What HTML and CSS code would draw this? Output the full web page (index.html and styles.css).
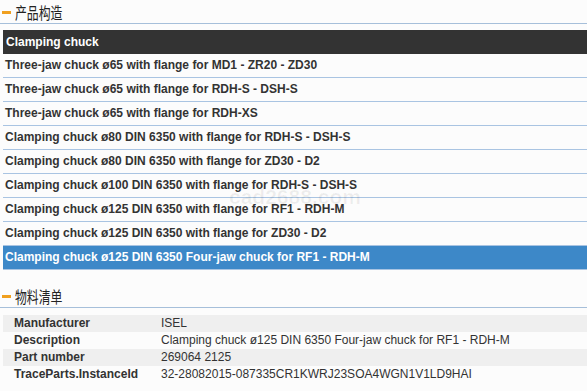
FILE: index.html
```html
<!DOCTYPE html>
<html lang="zh">
<head>
<meta charset="utf-8">
<title>产品构造</title>
<link rel="stylesheet" href="styles.css">
</head>
<body>
<div class="page">
  <div class="section-head"><span class="dash"></span><span class="head-text">产品构造</span></div>
  <div class="list">
    <div class="list-title">Clamping chuck</div>
    <div class="row">Three-jaw chuck ø65 with flange for MD1 - ZR20 - ZD30</div>
    <div class="row">Three-jaw chuck ø65 with flange for RDH-S - DSH-S</div>
    <div class="row">Three-jaw chuck ø65 with flange for RDH-XS</div>
    <div class="row">Clamping chuck ø80 DIN 6350 with flange for RDH-S - DSH-S</div>
    <div class="row">Clamping chuck ø80 DIN 6350 with flange for ZD30 - D2</div>
    <div class="row">Clamping chuck ø100 DIN 6350 with flange for RDH-S - DSH-S</div>
    <div class="row">Clamping chuck ø125 DIN 6350 with flange for RF1 - RDH-M</div>
    <div class="row">Clamping chuck ø125 DIN 6350 with flange for ZD30 - D2</div>
    <div class="row active">Clamping chuck ø125 DIN 6350 Four-jaw chuck for RF1 - RDH-M</div>
  </div>
  <div class="section-head second"><span class="dash"></span><span class="head-text">物料清单</span></div>
  <div class="bom">
    <div class="bom-row alt"><span class="label">Manufacturer</span><span class="value">ISEL</span></div>
    <div class="bom-row"><span class="label">Description</span><span class="value">Clamping chuck ø125 DIN 6350 Four-jaw chuck for RF1 - RDH-M</span></div>
    <div class="bom-row alt"><span class="label">Part number</span><span class="value">269064 2125</span></div>
    <div class="bom-row"><span class="label">TraceParts.InstanceId</span><span class="value">32-28082015-087335CR1KWRJ23SOA4WGN1V1LD9HAI</span></div>
  </div>
  <div class="watermark">cad2688.com</div>
</div>
</body>
</html>
```

FILE: styles.css
```css
html, body {
  margin: 0;
  padding: 0;
  background: #fcfcfc;
}
body {
  width: 587px;
  height: 391px;
  overflow: hidden;
  font-family: "Liberation Sans", Arial, sans-serif;
  font-size: 12px;
  color: #333;
}
.page {
  position: relative;
}
.section-head {
  height: 23px;
  border-bottom: 1px solid #a6bfda;
  display: flex;
  align-items: flex-start;
  position: relative;
}
.section-head.second {
  margin-top: 14px;
}
.dash {
  display: block;
  width: 9px;
  height: 3px;
  background: #f0a020;
  margin: 11px 0 0 2px;
}
.head-text {
  display: inline-block;
  margin-left: 4px;
  margin-top: 3px;
  font-family: "Noto Sans CJK SC", "Noto Sans", sans-serif;
  font-size: 16px;
  line-height: 18px;
  color: #222;
  transform: scaleX(0.74);
  transform-origin: left top;
}
.list {
  margin: 6px 0 0 3px;
}
.list-title {
  height: 24px;
  line-height: 24px;
  background: #333333;
  color: #fff;
  font-weight: bold;
  padding-left: 3px;
}
.row {
  height: 23px;
  line-height: 23px;
  border-bottom: 1px solid #a9c4e2;
  font-weight: bold;
  padding-left: 2px;
  white-space: nowrap;
}
.row.active {
  background: #3d88c8;
  color: #fff;
}
.bom {
  margin: 7px 0 0 3px;
}
.bom-row {
  display: grid;
  grid-template-columns: 158px 1fr;
  height: 17px;
  line-height: 17px;
  white-space: nowrap;
}
.bom-row.alt {
  background: #efefef;
}
.label {
  font-weight: bold;
  padding-left: 11px;
}
.watermark {
  position: absolute;
  left: 229px;
  top: 185px;
  font-size: 21px;
  font-weight: bold;
  color: rgba(0, 0, 0, 0.06);
  pointer-events: none;
}
```
